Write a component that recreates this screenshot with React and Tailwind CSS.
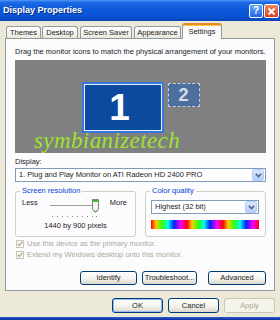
export default function App() {
  const tabs = [
    { label: "Themes", w: "w-[35px]", ml: "ml-[1px]" },
    { label: "Desktop", w: "w-[36px]", ml: "ml-[1px]" },
    { label: "Screen Saver", w: "w-[52px]", ml: "ml-[2px]" },
    { label: "Appearance", w: "w-[47px]", ml: "ml-[2px]" },
  ];
  const xpBtn =
    "h-[14px] rounded-[3px] border border-[#003C74] bg-[linear-gradient(to_bottom,#FFFFFF,#F4F3EE_55%,#DCD7CB)] flex items-center justify-center";
  const Arrow = () => (
    <div className="w-[12px] h-[12px] mr-[1px] rounded-[2px] border border-[#B9CCF3] bg-[linear-gradient(to_bottom,#DCE7FD,#B7CDF9)] flex items-center justify-center">
      <svg width="7" height="5" viewBox="0 0 7 5">
        <path d="M0.8 0.8 L3.5 3.6 L6.2 0.8" fill="none" stroke="#4D6185" strokeWidth="1.5" />
      </svg>
    </div>
  );
  const Check = () => (
    <div className="w-[8px] h-[8px] ml-[1px] border border-[#C9C7BA] bg-[#F7F6F0] flex items-center justify-center">
      <svg width="6" height="6" viewBox="0 0 6 6">
        <path d="M0.8 2.8 L2.3 4.4 L5.3 1" fill="none" stroke="#ACA899" strokeWidth="1.2" />
      </svg>
    </div>
  );
  return (
    <div className="w-[280px] h-[320px] bg-[#ECE9D8] flex flex-col overflow-hidden font-['Liberation_Sans',Arial,sans-serif] text-[7.5px] leading-[10px] text-[#222222]">
      {/* title bar */}
      <div className="h-[21px] shrink-0 flex items-start justify-between pl-[3px] pr-[1px] bg-[linear-gradient(to_bottom,#4D95F5_0%,#1C69E6_12%,#0B58DA_45%,#0A52D2_80%,#0845B8_100%)]">
        <span className="mt-[4px] text-white font-bold text-[9px] leading-[12px] [text-shadow:1px_1px_0_#0A2C80]">
          Display Properties
        </span>
        <div className="flex gap-[1px] mt-[4px]">
          <div className="w-[14px] h-[14px] rounded-[2px] border border-white bg-[linear-gradient(to_bottom,#6BA6FA,#2463E2)] flex items-center justify-center text-white font-bold text-[10px] leading-none">
            ?
          </div>
          <div className="w-[15px] h-[14px] rounded-[2px] border border-white bg-[linear-gradient(to_bottom,#F0875F,#D5431C)] flex items-center justify-center">
            <svg width="9" height="9" viewBox="0 0 9 9">
              <path d="M1.5 1.5 L7.5 7.5 M7.5 1.5 L1.5 7.5" stroke="white" strokeWidth="1.8" />
            </svg>
          </div>
        </div>
      </div>

      <div className="px-[5px] flex flex-col">
        {/* tabs */}
        <div className="h-[15px] mt-[2px] flex items-end">
          {tabs.map((t) => (
            <div
              key={t.label}
              className={`${t.w} ${t.ml} h-[12px] border border-b-0 border-[#919B9C] rounded-t-[3px] bg-[linear-gradient(to_bottom,#FFFFFF,#F4F3EE_60%,#E8E6DC)] flex items-center justify-center whitespace-nowrap`}
            >
              {t.label}
            </div>
          ))}
          <div className="relative z-10 w-[40px] ml-[1px] h-[16px] -mb-px border border-b-0 border-[#919B9C] border-t-2 border-t-[#E68B2C] rounded-t-[3px] bg-[#FCFCFE] flex items-start justify-center pt-[2px] shadow-[inset_0_1px_0_#FFC73C]">
            Settings
          </div>
        </div>

        {/* panel */}
        <div className="h-[253px] border border-[#919B9C] bg-[#FCFCFE] flex flex-col pl-[9px] pr-[8px] pt-[8px]">
          <div className="whitespace-nowrap">
            Drag the monitor icons to match the physical arrangement of your monitors.
          </div>

          <div className="relative mt-[3px] h-[93px] bg-[#808080] flex justify-center items-start pt-[22px] gap-[4px]">
            <div className="w-[82px] h-[51px] border-2 border-[#3577DC] bg-[#0B4A9F] shadow-[inset_0_0_0_1px_#E6EEF9] flex items-center justify-center pr-[6px]">
              <span className="text-white font-bold text-[37px] leading-none">1</span>
            </div>
            <div className="mt-[1px] w-[32px] h-[24px] border border-dashed border-[#C9D0DA] bg-[#4C6F9E] flex items-center justify-center">
              <span className="text-[#D6DDE8] font-bold text-[18px] leading-none">2</span>
            </div>
            <span className="absolute left-[19px] bottom-[0px] text-[#9BE52E] italic font-['Liberation_Serif',serif] text-[23px] leading-[24px] tracking-[0.4px]">
              symbianizetech
            </span>
          </div>

          <div className="mt-[4px]">Display:</div>
          <div className="mt-[1px] h-[14px] border border-[#7F9DB9] bg-white flex items-center justify-between">
            <span className="pl-[3px] whitespace-nowrap">1. Plug and Play Monitor on ATI Radeon HD 2400 PRO</span>
            <Arrow />
          </div>

          {/* groups */}
          <div className="mt-[4px] flex justify-between">
            <fieldset className="w-[121px] h-[51px] border border-[#D0D0BF] rounded-[3px] p-0 m-0 min-w-0">
              <legend className="ml-[4px] px-[2px] text-[#0046D5] leading-[10px]">Screen resolution</legend>
              <div className="flex items-start pl-[6px]">
                <span className="mt-[2px]">Less</span>
                <svg className="ml-[10px]" width="52" height="23" viewBox="0 0 52 23">
                  <line x1="2" y1="9.5" x2="49" y2="9.5" stroke="#9D9C93" strokeWidth="1" />
                  <line x1="2" y1="10.5" x2="49" y2="10.5" stroke="#FFFFFF" strokeWidth="1" />
                  {[4, 9, 14, 19, 24, 29, 34, 39, 44, 48].map((x) => (
                    <rect key={x} x={x} y="20" width="1" height="1" fill="#8E8D85" />
                  ))}
                  <path d="M44.5 3.5 H50.5 V13.5 L47.5 16.5 L44.5 13.5 Z" fill="#F6F6F2" stroke="#7C8B74" strokeWidth="1" />
                  <rect x="45" y="4" width="5" height="2" fill="#3FBC3F" />
                  <path d="M45.5 13.8 L47.5 15.8 L49.5 13.8" fill="none" stroke="#3FBC3F" strokeWidth="1" />
                </svg>
                <span className="ml-[10px] mt-[2px]">More</span>
              </div>
              <div className="mt-[2px] text-center">1440 by 900 pixels</div>
            </fieldset>

            <fieldset className="w-[121px] h-[51px] border border-[#D0D0BF] rounded-[3px] p-0 m-0 min-w-0">
              <legend className="ml-[4px] px-[2px] text-[#0046D5] leading-[10px]">Color quality</legend>
              <div className="mt-[4px] ml-[5px] mr-[6px] h-[14px] border border-[#7F9DB9] bg-white flex items-center justify-between">
                <span className="pl-[3px]">Highest (32 bit)</span>
                <Arrow />
              </div>
              <div className="mt-[6px] ml-[5px] mr-[6px] h-[9px] bg-[repeating-linear-gradient(to_right,#ff0000_0px,#ffcc00_5px,#33ff00_11px,#00ffee_17px,#0022ff_23px,#ff00ff_30px,#ff0000_36px)]" />
            </fieldset>
          </div>

          {/* checkboxes */}
          <div className="mt-[2px] h-[10px] flex items-center text-[#ACA899]">
            <Check />
            <span className="ml-[3px]">Use this device as the primary monitor.</span>
          </div>
          <div className="mt-[1px] h-[10px] flex items-center text-[#ACA899]">
            <Check />
            <span className="ml-[3px]">Extend my Windows desktop onto this monitor.</span>
          </div>

          {/* buttons */}
          <div className="mt-[11px] flex justify-end">
            <div className={`${xpBtn} w-[57px]`}>Identify</div>
            <div className={`${xpBtn} w-[55px] ml-[5px]`}>Troubleshoot...</div>
            <div className={`${xpBtn} w-[58px] ml-[11px]`}>Advanced</div>
          </div>
        </div>

        {/* dialog buttons */}
        <div className="mt-[7px] flex justify-end gap-[5px]">
          <div className={`${xpBtn} h-[15px] w-[51px] shadow-[inset_0_0_0_1px_#98BCF2]`}>OK</div>
          <div className={`${xpBtn} h-[15px] w-[51px]`}>Cancel</div>
          <div className="h-[15px] w-[51px] rounded-[3px] border border-[#C9C7BA] bg-[#F5F4EA] text-[#ACA899] flex items-center justify-center">
            Apply
          </div>
        </div>
      </div>

      <div className="flex-1" />
      <div className="h-[3px] shrink-0 bg-[linear-gradient(to_bottom,#2A5CD2,#0A2C9E)]" />
    </div>
  );
}
